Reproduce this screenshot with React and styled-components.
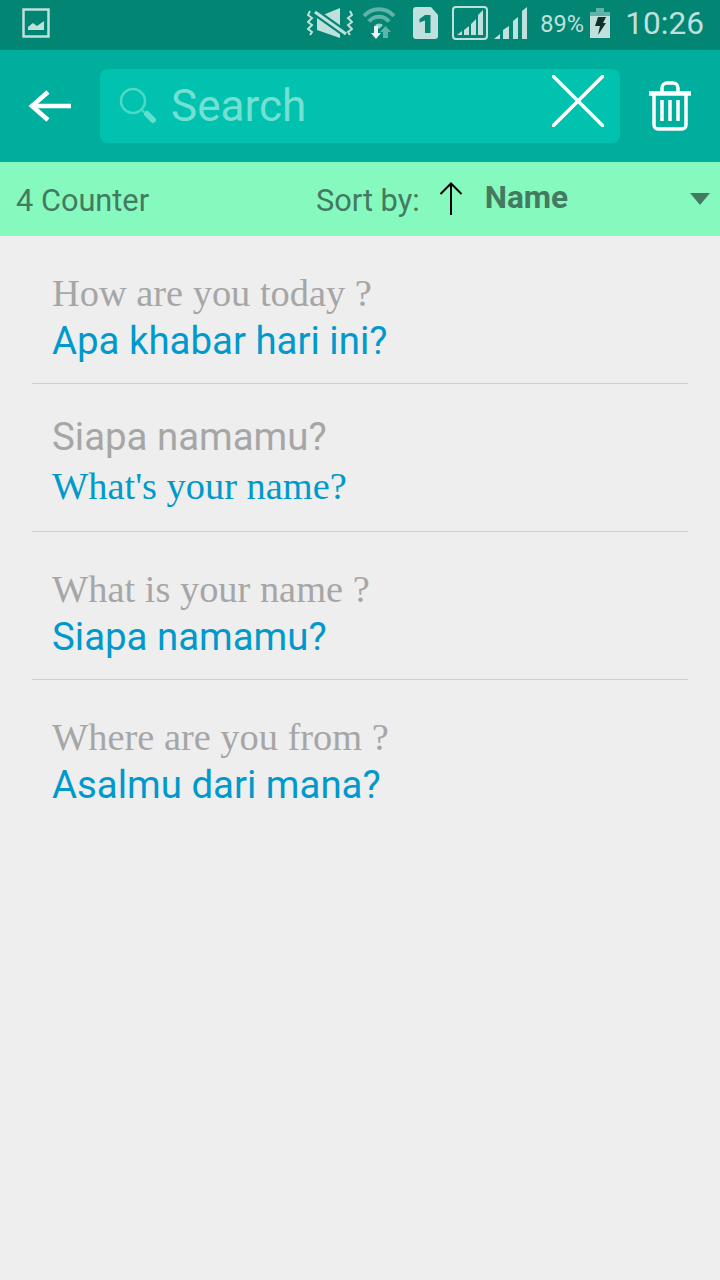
import styled, { createGlobalStyle } from 'styled-components';

const phrases = [
  { id: 1, top: 'How are you today ?', topSerif: true, bottom: 'Apa khabar hari ini?', bottomSerif: false },
  { id: 2, top: 'Siapa namamu?', topSerif: false, bottom: "What's your name?", bottomSerif: true },
  { id: 3, top: 'What is your name ?', topSerif: true, bottom: 'Siapa namamu?', bottomSerif: false },
  { id: 4, top: 'Where are you from ?', topSerif: true, bottom: 'Asalmu dari mana?', bottomSerif: false },
];

const App = () => {
  return (
    <Screen>
      <GlobalStyle />
      <StatusBar>
        <PictureIcon />
        <StatusRight>
          <MuteIcon />
          <WifiIcon />
          <SimIcon />
          <BoxedSignalIcon />
          <SignalIcon />
          <Percent>89%</Percent>
          <BatteryIcon />
          <Clock>10:26</Clock>
        </StatusRight>
      </StatusBar>
      <AppBar>
        <IconButton type="button" aria-label="Back">
          <svg width="43" height="32" viewBox="0 0 43 32" fill="none" stroke="#fff" strokeWidth="4.500">
            <path d="M43 16H5" />
            <path d="M20 2 4 16l16 14" />
          </svg>
        </IconButton>
        <SearchBox>
          <svg width="38" height="38" viewBox="0 0 38 38" fill="none">
            <circle cx="14" cy="14" r="12" stroke="#4fd8c8" strokeWidth="2.500" />
            <path d="M23 23 27 27" stroke="#4fd8c8" strokeWidth="2" />
            <path d="M28 27 34 33" stroke="#62dfd0" strokeWidth="6" strokeLinecap="round" />
          </svg>
          <SearchText>Search</SearchText>
          <ClearIcon width="52" height="52" viewBox="0 0 52 52" stroke="#fff" strokeWidth="3.500">
            <path d="M0 0 52 52M52 0 0 52" />
          </ClearIcon>
        </SearchBox>
        <TrashButton type="button" aria-label="Delete">
          <svg width="42" height="50" viewBox="0 0 42 50" fill="none" stroke="#fff" strokeWidth="3.500">
            <path d="M0 12.500H42" strokeWidth="4.500" />
            <path d="M13 11V7a5 5 0 0 1 5-5h6a5 5 0 0 1 5 5v4" />
            <path d="M5 13v31a4 4 0 0 0 4 4h24a4 4 0 0 0 4-4V13" />
            <path d="M13 19v21M21 19v21M29 19v21" />
          </svg>
        </TrashButton>
      </AppBar>
      <FilterBar>
        <Count>4 Counter</Count>
        <SortLabel>Sort by:</SortLabel>
        <svg width="24" height="34" viewBox="0 0 24 34" fill="none" stroke="#000" strokeWidth="2">
          <path d="M12 33V2" />
          <path d="M1.500 12 12 1.500 22.500 12" />
        </svg>
        <SortValue>Name</SortValue>
        <Caret />
      </FilterBar>
      <List>
        {phrases.map(({ id, top, topSerif, bottom, bottomSerif }) => (
          <Row key={id} $raised={!topSerif}>
            <Primary $serif={topSerif}>{top}</Primary>
            <Secondary $serif={bottomSerif}>{bottom}</Secondary>
          </Row>
        ))}
      </List>
    </Screen>
  );
};

export default App;

const PictureIcon = () => (
  <svg width="28" height="30" viewBox="0 0 28 30" fill="none">
    <rect x="1.500" y="1.500" width="25" height="27" stroke="#bfe0dc" strokeWidth="2.500" />
    <path d="M6 22v-3l5-4 4 3 7-5v9z" fill="#bfe0dc" />
  </svg>
);

const MuteIcon = () => (
  <svg width="46" height="32" viewBox="0 0 46 32" fill="none">
    <path d="M10 8h6L33 1v30L10 23z" fill="#bfe0dc" />
    <path d="M8 5 39 27" stroke="#038573" strokeWidth="7.500" />
    <path d="M8 5 39 27" stroke="#bfe0dc" strokeWidth="3.200" />
    <path d="M3 4 1 8l4 3-4 4 4 3-4 4 4 3-2 3M43 4l2 4-4 3 4 4-4 3 4 4-4 3 2 3" stroke="#bfe0dc" strokeWidth="2" />
  </svg>
);

const WifiIcon = () => (
  <WifiSlot>
    <svg width="34" height="32" viewBox="0 0 34 32" fill="none">
      <path d="M2 9C10 0 24 0 32 9" stroke="#5fb3a8" strokeWidth="4" />
      <path d="M7 14.500C12 8 22 8 27 14.500" stroke="#5fb3a8" strokeWidth="4" />
      <path d="M13 18a6 6 0 0 1 8 0l-4 4z" fill="#9ed0c9" />
      <path d="M21 31V25h-3l5.500-6 5.500 6h-3v6z" fill="#5fb3a8" />
      <path d="M14 32l-5-6h3v-7h4v7h3z" fill="#e8f4f2" />
    </svg>
  </WifiSlot>
);

const SimIcon = () => (
  <SimSlot>
    <svg width="25" height="32" viewBox="0 0 25 32">
      <path d="M3 0h15l7 8v21a3 3 0 0 1-3 3H3a3 3 0 0 1-3-3V3a3 3 0 0 1 3-3z" fill="#bfe0dc" />
      <path d="M6.500 12 12 8h5.500v18h-5.500V13.500l-5.500 2z" fill="#038573" />
    </svg>
  </SimSlot>
);

const BoxedSignalIcon = () => (
  <svg width="36" height="34" viewBox="0 0 36 34" fill="none">
    <rect x="1" y="1" width="34" height="32" rx="3" stroke="#bfe0dc" strokeWidth="2" />
    <path d="M5 29l5-4v4zM12 29v-5l5-4v9zM19 29V18l5-5v16zM26 29V9l5-5v25z" fill="#bfe0dc" />
  </svg>
);

const SignalIcon = () => (
  <SignalSlot>
    <svg width="33" height="32" viewBox="0 0 33 32">
      <path d="M0 32l6-5v5zM9 32V23l6-4v13zM19 32V14l5-4v22zM28 32V4l5-4v32z" fill="#bfe0dc" />
    </svg>
  </SignalSlot>
);

const BatteryIcon = () => (
  <svg width="20" height="30" viewBox="0 0 20 30">
    <path d="M6 0h8v4H6zM0 4h20v4H0z" fill="#5fb3a8" />
    <rect x="0" y="8" width="20" height="22" fill="#bfe0dc" />
    <path d="M8 9h8l-3 6h3L8 27l2-9H5z" fill="#10302b" />
  </svg>
);

const GlobalStyle = createGlobalStyle`
  html, body {
    margin: 0;
    padding: 0;
  }
  body {
    background: #eeeeee;
    font-family: Roboto, "Liberation Sans", sans-serif;
  }
`;

const Screen = styled.div`
  width: 720px;
  height: 1280px;
  overflow: hidden;
  background: #eeeeee;
`;

const StatusBar = styled.div`
  height: 50px;
  padding: 0 16px 4px 22px;
  box-sizing: border-box;
  display: flex;
  justify-content: space-between;
  align-items: center;
  background: #038573;
`;

const StatusRight = styled.div`
  display: flex;
  align-items: center;
`;

const WifiSlot = styled.div`
  display: flex;
  margin-left: 9px;
`;

const SimSlot = styled.div`
  display: flex;
  margin: 0 14px 0 17px;
`;

const SignalSlot = styled.div`
  display: flex;
  margin-left: 6px;
`;

const Percent = styled.span`
  width: 43px;
  margin: 1px 7px 0 13px;
  font-size: 23.500px;
  white-space: nowrap;
  color: #bfe0dc;
`;

const Clock = styled.span`
  margin-left: 15px;
  font-size: 31.600px;
  color: #bfe0dc;
`;

const AppBar = styled.div`
  height: 112px;
  box-sizing: border-box;
  padding: 19px 29px 19px 0;
  display: flex;
  align-items: center;
  background: #00ae9e;
`;

const IconButton = styled.button`
  width: 100px;
  flex-shrink: 0;
  box-sizing: border-box;
  padding: 0 0 0 28px;
  display: flex;
  border: none;
  background: none;
`;

const SearchBox = styled.div`
  width: 520px;
  height: 74px;
  flex-shrink: 0;
  box-sizing: border-box;
  padding: 0 16px 0 19px;
  display: flex;
  align-items: center;
  border-radius: 8px;
  background: #00c2ae;
`;

const SearchText = styled.span`
  flex: 1;
  margin-left: 14px;
  font-size: 44px;
  color: #74e0d3;
`;

const ClearIcon = styled.svg`
  align-self: flex-start;
  margin-top: 6px;
`;

const TrashButton = styled.button`
  margin-left: 29px;
  padding: 0;
  display: flex;
  border: none;
  background: none;
`;

const FilterBar = styled.div`
  height: 74px;
  box-sizing: border-box;
  padding: 0 10px 0 16px;
  display: flex;
  align-items: center;
  background: #86f9be;
  color: #437a60;
`;

const Count = styled.span`
  width: 300px;
  margin-top: 2px;
  font-size: 30.720px;
`;

const SortLabel = styled.span`
  margin: 2px 19px 0 0;
  font-size: 30.720px;
`;

const SortValue = styled.span`
  flex: 1;
  margin: -4px 0 0 22px;
  font-size: 31.500px;
  font-weight: 700;
`;

const Caret = styled.span`
  width: 0;
  height: 0;
  border-left: 10px solid transparent;
  border-right: 10px solid transparent;
  border-top: 12px solid #437a60;
`;

const List = styled.div`
  padding: 0 32px;
`;

const Row = styled.div`
  height: 148px;
  box-sizing: border-box;
  padding: ${({ $raised }) => ($raised ? '28px' : '32px')} 20px 0;
  display: flex;
  flex-direction: column;
  border-bottom: 1px solid #d0d0d0;
  &:last-child {
    border-bottom: none;
  }
`;

const Primary = styled.div`
  height: 50px;
  font-family: ${({ $serif }) => ($serif ? '"Liberation Serif", serif' : 'Roboto, sans-serif')};
  font-size: 38.400px;
  line-height: 50px;
  color: #a6a6a6;
`;

const Secondary = styled.div`
  height: 50px;
  padding-top: ${({ $serif }) => ($serif ? '1px' : '0')};
  font-family: ${({ $serif }) => ($serif ? '"Liberation Serif", serif' : 'Roboto, sans-serif')};
  font-size: 38.400px;
  line-height: 46px;
  color: #0099cc;
`;
